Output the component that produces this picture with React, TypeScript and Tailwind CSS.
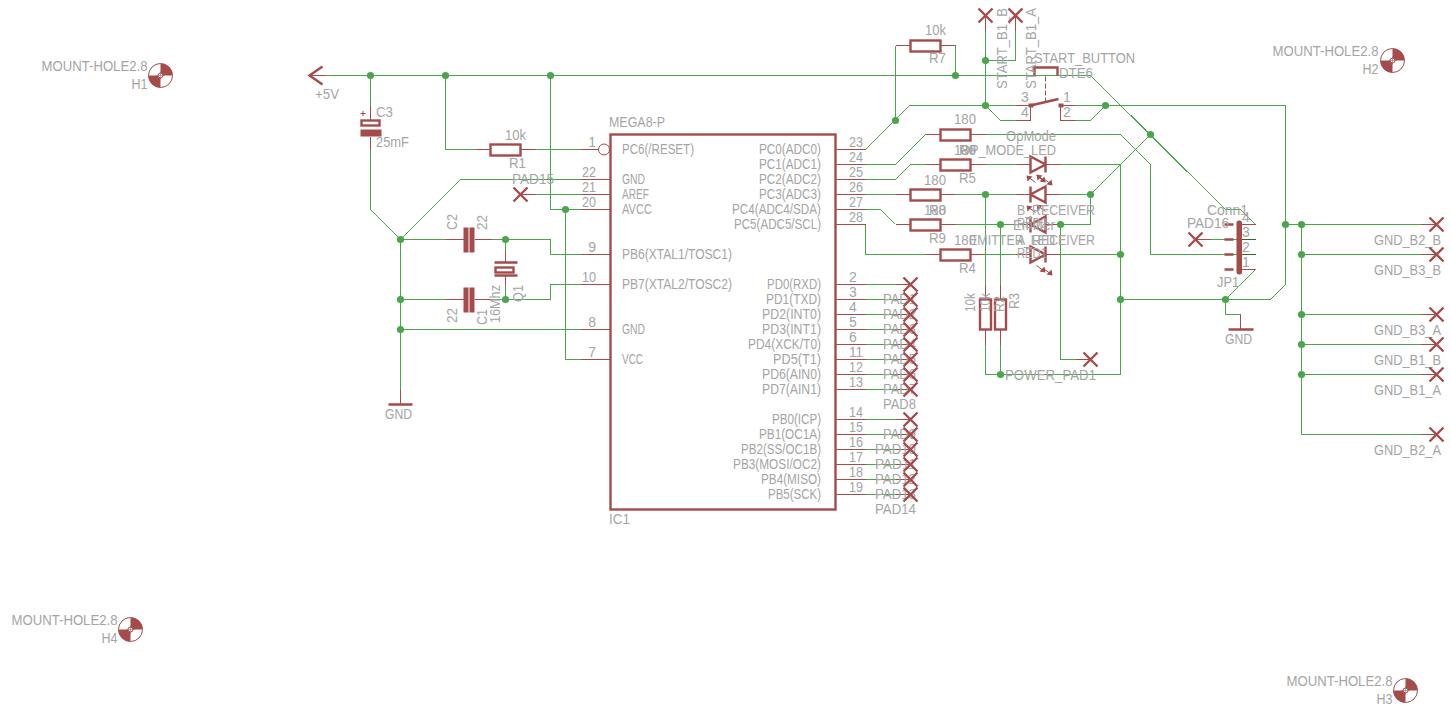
const WIRE = "fill-none stroke-[#4ba54b] stroke-1"
const THIN = "fill-none stroke-[#a54b4b] stroke-1"
const THICK = "fill-none stroke-[#a54b4b] stroke-[2.4px]"
const SOLID = "fill-[#a54b4b] stroke-none"

type Pt = [number, number]

const leftPins = [
  { y: 149, n: "1", label: "PC6(/RESET)", w: 72 }, { y: 179, n: "22", label: "GND", w: 23 }, { y: 194, n: "21", label: "AREF", w: 27 },
  { y: 209, n: "20", label: "AVCC", w: 30 }, { y: 254, n: "9", label: "PB6(XTAL1/TOSC1)", w: 110 }, { y: 284, n: "10", label: "PB7(XTAL2/TOSC2)", w: 110 },
  { y: 329, n: "8", label: "GND", w: 23 }, { y: 359, n: "7", label: "VCC", w: 21 },
]

const rightPins = [
  { y: 149, n: "23", label: "PC0(ADC0)", w: 62 }, { y: 164, n: "24", label: "PC1(ADC1)", w: 62 }, { y: 179, n: "25", label: "PC2(ADC2)", w: 62 },
  { y: 194, n: "26", label: "PC3(ADC3)", w: 62 }, { y: 209, n: "27", label: "PC4(ADC4/SDA)", w: 89 }, { y: 224, n: "28", label: "PC5(ADC5/SCL)", w: 87 },
  { y: 284, n: "2", label: "PD0(RXD)", w: 54, pad: "PAD1" }, { y: 299, n: "3", label: "PD1(TXD)", w: 55, pad: "PAD2" },
  { y: 314, n: "4", label: "PD2(INT0)", w: 59, pad: "PAD3" }, { y: 329, n: "5", label: "PD3(INT1)", w: 59, pad: "PAD4" },
  { y: 344, n: "6", label: "PD4(XCK/T0)", w: 73, pad: "PAD5" }, { y: 359, n: "11", label: "PD5(T1)", w: 48, pad: "PAD6" },
  { y: 374, n: "12", label: "PD6(AIN0)", w: 59, pad: "PAD7" }, { y: 389, n: "13", label: "PD7(AIN1)", w: 59, pad: "PAD8" },
  { y: 419, n: "14", label: "PB0(ICP)", w: 49, pad: "PAD9" }, { y: 434, n: "15", label: "PB1(OC1A)", w: 62, pad: "PAD10" },
  { y: 449, n: "16", label: "PB2(SS/OC1B)", w: 80, pad: "PAD11" }, { y: 464, n: "17", label: "PB3(MOSI/OC2)", w: 88, pad: "PAD12" },
  { y: 479, n: "18", label: "PB4(MISO)", w: 60, pad: "PAD13" }, { y: 494, n: "19", label: "PB5(SCK)", w: 53, pad: "PAD14" },
]

const padPins = rightPins.filter((p) => p.pad)

// nets, as polylines
const wires: Pt[][] = [
  [[325, 75], [1090, 75], [1225, 209], [1240, 209], [1255, 224]],
  [[370, 75], [370, 105]],
  [[370, 149], [370, 209], [400, 239], [460, 179], [580, 179]],
  [[445, 75], [445, 149], [475, 149]],
  [[535, 149], [580, 149]],
  [[550, 75], [550, 209], [580, 209]],
  [[565, 209], [565, 359], [580, 359]],
  [[535, 194], [580, 194]],
  [[400, 239], [445, 239]],
  [[491, 239], [550, 239], [550, 254], [580, 254]],
  [[505, 239], [505, 250]],
  [[505, 285], [505, 299]],
  [[400, 299], [445, 299]],
  [[490, 299], [550, 299], [550, 284], [580, 284]],
  [[400, 239], [400, 389]],
  [[400, 329], [580, 329]],
  [[865, 149], [909, 105], [1015, 105]],
  [[985, 30], [985, 105], [1000, 120], [1015, 120]],
  [[1015, 30], [1015, 60], [985, 60]],
  [[895, 45], [895, 120]],
  [[955, 45], [955, 75]],
  [[1075, 105], [1285, 105], [1285, 284], [1270, 299], [1120, 299]],
  [[1075, 120], [1090, 120], [1105, 105]],
  [[865, 164], [895, 164], [925, 134]],
  [[985, 134], [1120, 134], [1150, 164], [1150, 254], [1240, 254]],
  [[865, 179], [895, 179], [910, 164], [925, 164]],
  [[985, 164], [1015, 164]],
  [[1060, 164], [1120, 164], [1120, 374], [985, 374], [985, 344]],
  [[1000, 374], [1000, 344]],
  [[865, 194], [895, 194]],
  [[955, 194], [1015, 194]],
  [[1060, 194], [1090, 194], [1150, 134]],
  [[985, 194], [985, 284]],
  [[865, 209], [880, 209], [895, 224]],
  [[955, 224], [1015, 224]],
  [[1060, 224], [1090, 224], [1090, 194]],
  [[1000, 224], [1000, 284]],
  [[1060, 224], [1060, 359], [1075, 359]],
  [[865, 224], [865, 254], [925, 254]],
  [[985, 254], [1015, 254]],
  [[1060, 254], [1120, 254]],
  [[1225, 299], [1255, 269]],
  [[1225, 299], [1225, 314], [1240, 314]],
  [[1210, 239], [1240, 239]],
  [[1285, 224], [1301, 224], [1301, 434]],
  [[1301, 224], [1420, 224]],
  [[1301, 254], [1420, 254]],
  [[1301, 314], [1420, 314]],
  [[1301, 344], [1420, 344]],
  [[1301, 374], [1420, 374]],
  [[1301, 434], [1420, 434]],
  ...padPins.map((p): Pt[] => [[865, p.y], [895, p.y]]),
]

const dots: Pt[] = [
  [370, 75], [445, 75], [550, 75], [565, 209], [400, 239], [400, 299], [400, 329], [505, 239], [505, 299],
  [955, 75], [895, 120], [985, 60], [985, 105], [1105, 105], [1150, 134], [985, 194], [1090, 194],
  [1000, 224], [1060, 224], [1120, 254], [1120, 299], [1000, 374], [1225, 299], [1285, 224],
  [1301, 224], [1301, 254], [1301, 314], [1301, 344], [1301, 374],
]

// thin maroon pin stubs
const stubs: [number, number, number, number][] = [
  [309, 75, 325, 75], [370, 105, 370, 119], [370, 136, 370, 149],
  [475, 149, 490, 149], [520, 149, 535, 149], [580, 149, 598, 149],
  [580, 179, 610, 179], [580, 194, 610, 194], [520, 194, 535, 194], [580, 209, 610, 209],
  [580, 254, 610, 254], [580, 284, 610, 284], [580, 329, 610, 329], [580, 359, 610, 359],
  [445, 239, 463, 239], [474, 239, 491, 239], [445, 299, 463, 299], [474, 299, 490, 299],
  [505, 250, 505, 262], [505, 275, 505, 285], [400, 389, 400, 404],
  [835, 149, 865, 149], [835, 164, 865, 164], [835, 179, 865, 179], [835, 194, 865, 194],
  [835, 209, 865, 209], [835, 224, 865, 224],
  [985, 15, 985, 30], [1015, 15, 1015, 30],
  [895, 45, 910, 45], [940, 45, 955, 45],
  [925, 134, 940, 134], [970, 134, 985, 134], [925, 164, 940, 164], [970, 164, 985, 164],
  [895, 194, 910, 194], [940, 194, 955, 194], [895, 224, 910, 224], [940, 224, 955, 224],
  [925, 254, 940, 254], [970, 254, 985, 254],
  [1015, 164, 1030, 164], [1045, 164, 1060, 164], [1015, 194, 1030, 194], [1045, 194, 1060, 194],
  [1015, 224, 1030, 224], [1045, 224, 1060, 224], [1015, 254, 1030, 254], [1045, 254, 1060, 254],
  [985, 284, 985, 299], [985, 329, 985, 344], [1000, 284, 1000, 299], [1000, 329, 1000, 344],
  [1075, 359, 1090, 359], [1015, 105, 1030, 105], [1015, 120, 1030, 120], [1030, 105, 1030, 120],
  [1060, 105, 1075, 105], [1060, 105, 1060, 120], [1060, 120, 1075, 120],
  [1240, 224, 1255, 224], [1240, 269, 1255, 269], [1195, 239, 1210, 239],
  [1240, 314, 1240, 329],
  [1420, 224, 1436, 224], [1420, 254, 1436, 254], [1420, 314, 1436, 314],
  [1420, 344, 1436, 344], [1420, 374, 1436, 374], [1420, 434, 1436, 434],
  ...padPins.flatMap((p): [number, number, number, number][] => [[835, p.y, 865, p.y], [895, p.y, 910, p.y]]),
]

const crosses: Pt[] = [
  [520, 194], [985, 15], [1015, 15], [1090, 359], [1195, 239],
  [1436, 224], [1436, 254], [1436, 314], [1436, 344], [1436, 374], [1436, 434],
  ...padPins.map((p): Pt => [910, p.y]),
]

const holes = [
  { x: 160, y: 75, right: 147, name: "H1" },
  { x: 1392, y: 60, right: 1378, name: "H2" },
  { x: 1405, y: 690, right: 1392, name: "H3" },
  { x: 130, y: 629, right: 117, name: "H4" },
]

const gndLabels = [
  { y: 245, t: "GND_B2_B" }, { y: 275, t: "GND_B3_B" }, { y: 335, t: "GND_B3_A" },
  { y: 365, t: "GND_B1_B" }, { y: 395, t: "GND_B1_A" }, { y: 455, t: "GND_B2_A" },
]

const labels: { x: number; y: number; t: string; w?: number }[] = [
  { x: 315, y: 99, t: "+5V", w: 24 }, { x: 376, y: 117, t: "C3", w: 17 }, { x: 376, y: 147, t: "25mF", w: 33 },
  { x: 505, y: 140, t: "10k", w: 21 }, { x: 509, y: 168, t: "R1", w: 17 }, { x: 512, y: 184, t: "PAD15", w: 42 },
  { x: 385, y: 419, t: "GND", w: 27 }, { x: 609, y: 127, t: "MEGA8-P", w: 56 }, { x: 609, y: 524, t: "IC1", w: 21 },
  { x: 925, y: 35, t: "10k", w: 21 }, { x: 929, y: 63, t: "R7", w: 17 },
  { x: 954, y: 124, t: "180", w: 22 }, { x: 959, y: 155, t: "R6", w: 17 }, { x: 954, y: 155, t: "180", w: 22 },
  { x: 960, y: 155, t: "OP_MODE_LED", w: 96 }, { x: 1006, y: 141, t: "OpMode", w: 50 }, { x: 959, y: 183, t: "R5", w: 17 },
  { x: 924, y: 185, t: "180", w: 22 }, { x: 929, y: 215, t: "R8", w: 17 }, { x: 924, y: 215, t: "180", w: 22 },
  { x: 929, y: 243, t: "R9", w: 17 }, { x: 954, y: 245, t: "180", w: 22 }, { x: 959, y: 273, t: "R4", w: 17 },
  { x: 1017, y: 215, t: "B_RECEIVER", w: 78 }, { x: 1017, y: 245, t: "A_RECEIVER", w: 78 }, { x: 969, y: 245, t: "EMITTER_LED", w: 86 },
  { x: 1013, y: 230, t: "Emitter", w: 42 }, { x: 1017, y: 228, t: "RED2", w: 30 }, { x: 1017, y: 258, t: "RED1", w: 30 },
  { x: 1005, y: 380, t: "POWER_PAD1", w: 91 }, { x: 1034, y: 63, t: "START_BUTTON", w: 101 }, { x: 1059, y: 78, t: "DTE6", w: 34 },
  { x: 1021, y: 102, t: "3" }, { x: 1063, y: 102, t: "1" }, { x: 1021, y: 117, t: "4" }, { x: 1063, y: 117, t: "2" },
  { x: 1207, y: 215, t: "Conn1", w: 41 }, { x: 1242, y: 222, t: "4" }, { x: 1242, y: 237, t: "3" },
  { x: 1242, y: 252, t: "2" }, { x: 1242, y: 267, t: "1" }, { x: 1187, y: 228, t: "PAD16", w: 42 },
  { x: 1217, y: 287, t: "JP1", w: 22 }, { x: 1225, y: 344, t: "GND", w: 27 },
]

const upLabels: { x: number; y: number; t: string; w: number }[] = [
  { x: 457, y: 230, t: "C2", w: 16 }, { x: 487, y: 230, t: "22", w: 15 }, { x: 457, y: 323, t: "22", w: 15 },
  { x: 487, y: 325, t: "C1", w: 16 }, { x: 500, y: 323, t: "16Mhz", w: 38 }, { x: 523, y: 302, t: "Q1", w: 17 },
  { x: 1007, y: 89, t: "START_B1_B", w: 81 }, { x: 1036, y: 89, t: "START_B1_A", w: 81 },
  { x: 975, y: 312, t: "10k", w: 19 }, { x: 990, y: 312, t: "10k", w: 19 }, { x: 1004, y: 312, t: "R2", w: 16 }, { x: 1019, y: 309, t: "R3", w: 16 },
]

function Label({ x, y, t, w, end, up }: { x: number; y: number; t: string; w?: number; end?: boolean; up?: boolean }) {
  return (
    <text
      x={x}
      y={y}
      textAnchor={end ? "end" : "start"}
      textLength={w}
      lengthAdjust={w ? "spacingAndGlyphs" : undefined}
      transform={up ? `rotate(-90 ${x} ${y})` : undefined}
      className="fill-[#a5a5a5] text-[14px] font-['Liberation_Sans',sans-serif]"
    >
      {t}
    </text>
  )
}

function Cross({ x, y }: { x: number; y: number }) {
  return <path d={`M${x - 7} ${y - 7}L${x + 7} ${y + 7}M${x - 7} ${y + 7}L${x + 7} ${y - 7}`} className={THICK} />
}

function Resistor({ x, y, up }: { x: number; y: number; up?: boolean }) {
  return up ? (
    <rect x={x - 5.5} y={y} width={11} height={30} className={THICK} />
  ) : (
    <rect x={x} y={y - 5} width={30} height={11} className={THICK} />
  )
}

// dir 1: triangle points right, bar on the right. dir -1: mirrored
function Led({ y, dir }: { y: number; dir: 1 | -1 }) {
  const base = dir === 1 ? 1030 : 1045
  const tip = dir === 1 ? 1045 : 1030
  return <path d={`M${base} ${y - 8}L${base} ${y + 8}L${tip} ${y}ZM${tip} ${y - 8}L${tip} ${y + 8}`} className={THICK} />
}

function Ray({ x, y, flip }: { x: number; y: number; flip?: boolean }) {
  const s = flip ? -1 : 1
  return (
    <g>
      <path d={`M${x - 8 * s} ${y - 6 * s}L${x} ${y}`} className={THIN} />
      <polygon
        points={`${x + 1 * s},${y + 1 * s} ${x - 5 * s},${y} ${x},${y - 5 * s}`}
        className={SOLID}
      />
    </g>
  )
}

function MountHole({ x, y, right, name }: { x: number; y: number; right: number; name: string }) {
  return (
    <g>
      <Label x={right} y={y - 5} t="MOUNT-HOLE2.8" w={106} end />
      <Label x={right} y={y + 13} t={name} w={16} end />
      <circle cx={x} cy={y} r={12} className="fill-white stroke-[#a54b4b] stroke-1" />
      <path d={`M${x} ${y}V${y - 12}A12 12 0 0 1 ${x + 12} ${y}Z`} className={SOLID} />
      <path d={`M${x} ${y}V${y + 12}A12 12 0 0 1 ${x - 12} ${y}Z`} className={SOLID} />
      <circle cx={x} cy={y} r={2.5} className="fill-white stroke-[#a54b4b] stroke-1" />
      <path d={`M${x - 4} ${y}H${x + 4}M${x} ${y - 4}V${y + 4}`} className="stroke-[#a54b4b] stroke-[0.5px]" />
    </g>
  )
}

export default function App() {
  return (
    <div className="h-[709px] w-[1451px] overflow-hidden bg-white">
      <svg width={1451} height={709} className="block">
        <g transform="translate(0.5 0.5)" shapeRendering="crispEdges">
          {stubs.map(([a, b, c, d], i) => (
            <line key={i} x1={a} y1={b} x2={c} y2={d} className={THIN} />
          ))}
          {wires.map((w, i) => (
            <polyline key={i} points={w.map((p) => p.join(",")).join(" ")} className={WIRE} />
          ))}
          <path d="M1240 239H1255M1240 254H1255" className="fill-none stroke-[#2f6b1d] stroke-1" />
        </g>

        <g transform="translate(0.5 0.5)">
          {dots.map(([x, y], i) => (
            <circle key={i} cx={x} cy={y} r={3.6} className="fill-[#4ba54b]" />
          ))}

          {/* +5V, gnd symbols */}
          <path d="M322 66L309 75L322 84" className={THICK} />
          <path d="M388 404H412M1228 329H1253" className={THICK} />

          {/* C3 */}
          <rect x={361} y={120} width={18} height={5} className={THICK} />
          <rect x={360} y={129} width={21} height={7} className={SOLID} />
          <path d="M360 113H365M362.5 110.5V115.5" className={THIN} />

          {/* C1, C2, Q1 */}
          <rect x={463} y={227} width={5} height={25} className={SOLID} />
          <rect x={469} y={227} width={5} height={25} className={SOLID} />
          <rect x={463} y={287} width={5} height={25} className={SOLID} />
          <rect x={469} y={287} width={5} height={25} className={SOLID} />
          <path d="M494 262H517M494 275H517" className={THICK} />
          <rect x={495} y={267} width={18} height={5} className={THICK} />

          <Resistor x={490} y={149} />
          <Resistor x={910} y={45} />
          <Resistor x={940} y={134} />
          <Resistor x={940} y={164} />
          <Resistor x={910} y={194} />
          <Resistor x={910} y={224} />
          <Resistor x={940} y={254} />
          <Resistor x={985} y={299} up />
          <Resistor x={1000} y={299} up />

          {/* MEGA8 */}
          <rect x={610} y={134} width={225} height={375} className={THICK} />
          <circle cx={603.5} cy={149} r={5.5} className="fill-white stroke-[#a54b4b] stroke-1" />

          <Led y={164} dir={1} />
          <Led y={194} dir={-1} />
          <Led y={224} dir={-1} />
          <Led y={254} dir={1} />
          <Ray x={1044} y={181} />
          <Ray x={1051} y={184} />
          <Ray x={1027} y={176} flip />
          <Ray x={1037} y={175} flip />
          <Ray x={1027} y={206} flip />
          <Ray x={1037} y={205} flip />
          <Ray x={1044} y={271} />
          <Ray x={1051} y={274} />

          {/* start button */}
          <path d="M1034 75V67H1057V75" className={THICK} />
          <path d="M1045 76V103" strokeDasharray="5 2" className={THIN} />
          <path d="M1030 105L1058 98.5" className={THICK} />
          <rect x={1028} y={103} width={5} height={4} className={SOLID} />
          <rect x={1058} y={103} width={5} height={4} className={SOLID} />

          {/* JP1 */}
          <rect x={1236} y={220} width={5.5} height={54} rx={2.5} className={SOLID} />
          <path d="M1224 224H1233M1224 239H1233M1224 254H1233M1224 269H1233" className={THICK} />

          {holes.map((h) => (
            <MountHole key={h.name} {...h} />
          ))}
        </g>

        {leftPins.map((p) => (
          <g key={p.n}>
            <Label x={596} y={p.y - 2} t={p.n} w={p.n.length === 2 ? 14 : undefined} end />
            <Label x={622} y={p.y + 5} t={p.label} w={p.w} />
          </g>
        ))}
        {rightPins.map((p) => (
          <g key={p.n}>
            <Label x={849} y={p.y - 2} t={p.n} w={p.n.length === 2 ? 14 : undefined} />
            <Label x={821} y={p.y + 5} t={p.label} w={p.w} end />
            {p.pad && <Label x={p.pad.length === 4 ? 883 : 875} y={p.y + 20} t={p.pad} w={p.pad.length === 4 ? 33 : 41} />}
          </g>
        ))}
        {labels.map((l, i) => (
          <Label key={i} {...l} />
        ))}
        {upLabels.map((l, i) => (
          <Label key={i} {...l} up />
        ))}
        {gndLabels.map((l) => (
          <Label key={l.t} x={1374} y={l.y} t={l.t} w={67} />
        ))}

        <g transform="translate(0.5 0.5)">
          {crosses.map(([x, y], i) => (
            <Cross key={i} x={x} y={y} />
          ))}
        </g>
      </svg>
    </div>
  )
}
